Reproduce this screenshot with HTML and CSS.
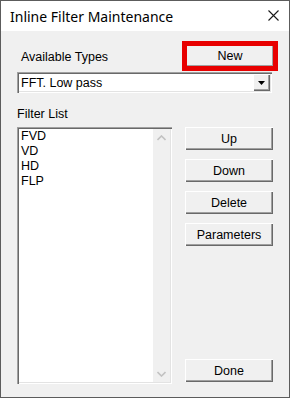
FILE: index.html
```html
<!DOCTYPE html>
<html lang="en">
<head>
    <meta charset="UTF-8">
    <title>Inline Filter Maintenance</title>
    <link rel="stylesheet" href="styles.css">
</head>
<body>
    <div class="window">
        <div class="titlebar">
            <span class="title">Inline Filter Maintenance</span>
            <svg class="close" width="11" height="11" viewBox="0 0 11 11">
                <path d="M0.5 0.5 L10.5 10.5 M10.5 0.5 L0.5 10.5" stroke="#1a1a1a" stroke-width="1.1" fill="none"/>
            </svg>
        </div>
        <div class="content">
            <div class="top-row">
                <span class="label indent">Available Types</span>
                <div class="highlight">
                    <button class="btn">New</button>
                </div>
            </div>
            <div class="combo">
                <span class="combo-text">FFT. Low pass</span>
                <span class="combo-arrow">
                    <svg width="7" height="4" viewBox="0 0 7 4"><path d="M0 0 H7 L3.5 4 Z" fill="#000"/></svg>
                </span>
            </div>
            <div class="label list-label">Filter List</div>
            <div class="main">
                <div class="listbox">
                    <ul class="items">
                        <li>FVD</li>
                        <li>VD</li>
                        <li>HD</li>
                        <li>FLP</li>
                    </ul>
                    <div class="scrollbar">
                        <svg width="9" height="6" viewBox="0 0 9 6"><path d="M0.5 5 L4.5 1 L8.5 5" stroke="#c2c2c2" stroke-width="1.6" fill="none"/></svg>
                        <svg width="9" height="6" viewBox="0 0 9 6"><path d="M0.5 1 L4.5 5 L8.5 1" stroke="#c2c2c2" stroke-width="1.6" fill="none"/></svg>
                    </div>
                </div>
                <div class="buttons">
                    <button class="btn">Up</button>
                    <button class="btn">Down</button>
                    <button class="btn">Delete</button>
                    <button class="btn">Parameters</button>
                    <button class="btn done">Done</button>
                </div>
            </div>
        </div>
    </div>
</body>
</html>
```

FILE: styles.css
```css
body {
    margin: 0;
    font-family: "Liberation Sans", Arial, sans-serif;
    font-size: 12.5px;
    color: #000;
}
.window {
    width: 290px;
    height: 398px;
    box-sizing: border-box;
    border: 1px solid #5c5c5c;
    background: #f0f0f0;
    display: flex;
    flex-direction: column;
}
.titlebar {
    height: 30px;
    background: #fff;
    display: flex;
    align-items: center;
    justify-content: space-between;
    padding: 0 10px 0 9px;
}
.title {
    font-family: "Noto Sans", sans-serif;
    font-size: 14px;
    color: #000;
}
.close {
    display: block;
    margin-top: -1px;
}
.content {
    padding: 0 15px 0 16px;
    display: flex;
    flex-direction: column;
}
.top-row {
    margin-top: 14px;
    display: flex;
    align-items: center;
    justify-content: space-between;
}
.label {
    line-height: 15px;
}
.indent {
    padding-left: 4px;
    margin-top: 3px;
}
.highlight {
    outline: 5px solid #e80000;
    outline-offset: -1px;
}
.btn {
    display: block;
    width: 88px;
    height: 23px;
    padding: 0;
    font-family: "Liberation Sans", Arial, sans-serif;
    font-size: 12.5px;
    color: #000;
    background: #f0f0f0;
    border: none;
    box-shadow: inset 1px 1px 0 #fff, inset -1px -1px 0 #696969, inset -2px -2px 0 #a0a0a0;
}
.highlight .btn {
    height: 22px;
}
.combo {
    margin-top: 5px;
    width: 255px;
    height: 21px;
    box-sizing: border-box;
    background: #fff;
    box-shadow: inset 1px 1px 0 #a0a0a0, inset 2px 2px 0 #696969, inset -1px -1px 0 #fff, inset -2px -2px 0 #e3e3e3;
    display: flex;
    align-items: center;
    justify-content: space-between;
    padding: 2px;
}
.combo-text {
    padding-left: 2px;
}
.combo-arrow {
    width: 17px;
    height: 17px;
    box-sizing: border-box;
    background: #f0f0f0;
    box-shadow: inset 1px 1px 0 #fff, inset -1px -1px 0 #696969, inset -2px -2px 0 #a0a0a0;
    display: flex;
    align-items: center;
    justify-content: center;
}
.combo-arrow svg {
    display: block;
    margin: 1px 1px 0 0;
}
.list-label {
    margin-top: 14px;
}
.main {
    margin-top: 5px;
    display: grid;
    grid-template-columns: 155px 88px;
    column-gap: 13px;
}
.listbox {
    height: 257px;
    box-sizing: border-box;
    background: #fff;
    padding: 2px;
    box-shadow: inset 1px 1px 0 #a0a0a0, inset 2px 2px 0 #696969, inset -1px -1px 0 #fff, inset -2px -2px 0 #e3e3e3;
    display: flex;
}
.items {
    list-style: none;
    margin: 0;
    padding: 0 0 0 2px;
    flex: 1;
    line-height: 15px;
}
.scrollbar {
    width: 17px;
    background: #f0f0f0;
    display: flex;
    flex-direction: column;
    align-items: center;
    justify-content: space-between;
    padding: 6px 0 5px;
}
.scrollbar svg {
    display: block;
}
.buttons {
    display: flex;
    flex-direction: column;
    gap: 9px;
}
.done {
    margin-top: auto;
    margin-bottom: 2px;
}
```
